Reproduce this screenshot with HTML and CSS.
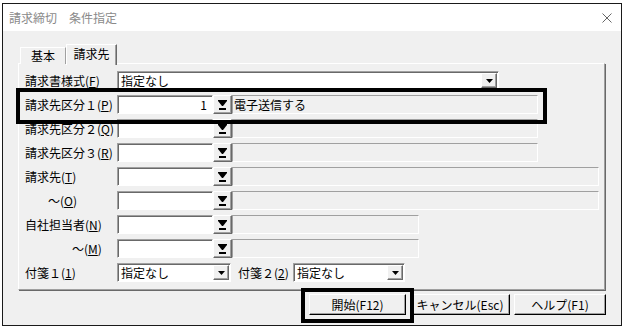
FILE: index.html
```html
<!DOCTYPE html>
<html lang="ja">
<head>
<meta charset="utf-8">
<link rel="stylesheet" href="styles.css">
</head>
<body>
<div class="window">
  <div class="titlebar">
    <span class="title">請求締切　条件指定</span>
    <svg class="close" width="10" height="10" viewBox="0 0 10 10"><path d="M0.5 0.5 L9.5 9.5 M9.5 0.5 L0.5 9.5" stroke="#666" stroke-width="1" fill="none"/></svg>
  </div>
  <div class="client">
    <div class="tabs">
      <div class="tab">基本</div>
      <div class="tab active">請求先</div>
    </div>
    <div class="panel">
      <div class="row">
        <span class="label">請求書様式(<u>F</u>)</span>
        <div class="select w-main"><span class="sel-text">指定なし</span><span class="sel-btn"><svg width="7" height="4" viewBox="0 0 7 4"><polygon points="0,0 7,0 3.5,4" fill="#000"/></svg></span></div>
      </div>
      <div class="row">
        <span class="label">請求先区分１(<u>P</u>)</span>
        <div class="input num">1</div>
        <span class="lookup"><svg width="9" height="10" viewBox="0 0 9 10"><polygon points="0,0 9,0 9,1 5,6 4,6 0,1" fill="#000"/><rect x="1" y="8" width="7" height="2" fill="#000"/></svg></span>
        <div class="field w-mid">電子送信する</div>
      </div>
      <div class="row">
        <span class="label">請求先区分２(<u>Q</u>)</span>
        <div class="input"></div>
        <span class="lookup"><svg width="9" height="10" viewBox="0 0 9 10"><polygon points="0,0 9,0 9,1 5,6 4,6 0,1" fill="#000"/><rect x="1" y="8" width="7" height="2" fill="#000"/></svg></span>
        <div class="field w-mid"></div>
      </div>
      <div class="row">
        <span class="label">請求先区分３(<u>R</u>)</span>
        <div class="input"></div>
        <span class="lookup"><svg width="9" height="10" viewBox="0 0 9 10"><polygon points="0,0 9,0 9,1 5,6 4,6 0,1" fill="#000"/><rect x="1" y="8" width="7" height="2" fill="#000"/></svg></span>
        <div class="field w-mid"></div>
      </div>
      <div class="row">
        <span class="label">請求先(<u>T</u>)</span>
        <div class="input"></div>
        <span class="lookup"><svg width="9" height="10" viewBox="0 0 9 10"><polygon points="0,0 9,0 9,1 5,6 4,6 0,1" fill="#000"/><rect x="1" y="8" width="7" height="2" fill="#000"/></svg></span>
        <div class="field w-long"></div>
      </div>
      <div class="row">
        <span class="label indent1">～(<u>O</u>)</span>
        <div class="input"></div>
        <span class="lookup"><svg width="9" height="10" viewBox="0 0 9 10"><polygon points="0,0 9,0 9,1 5,6 4,6 0,1" fill="#000"/><rect x="1" y="8" width="7" height="2" fill="#000"/></svg></span>
        <div class="field w-long"></div>
      </div>
      <div class="row">
        <span class="label">自社担当者(<u>N</u>)</span>
        <div class="input"></div>
        <span class="lookup"><svg width="9" height="10" viewBox="0 0 9 10"><polygon points="0,0 9,0 9,1 5,6 4,6 0,1" fill="#000"/><rect x="1" y="8" width="7" height="2" fill="#000"/></svg></span>
        <div class="field w-short"></div>
      </div>
      <div class="row">
        <span class="label indent2">～(<u>M</u>)</span>
        <div class="input"></div>
        <span class="lookup"><svg width="9" height="10" viewBox="0 0 9 10"><polygon points="0,0 9,0 9,1 5,6 4,6 0,1" fill="#000"/><rect x="1" y="8" width="7" height="2" fill="#000"/></svg></span>
        <div class="field w-short"></div>
      </div>
      <div class="row">
        <span class="label">付箋１(<u>1</u>)</span>
        <div class="select w-tag1"><span class="sel-text">指定なし</span><span class="sel-btn"><svg width="7" height="4" viewBox="0 0 7 4"><polygon points="0,0 7,0 3.5,4" fill="#000"/></svg></span></div>
        <span class="label2">付箋２(<u>2</u>)</span>
        <div class="select w-tag2"><span class="sel-text">指定なし</span><span class="sel-btn"><svg width="7" height="4" viewBox="0 0 7 4"><polygon points="0,0 7,0 3.5,4" fill="#000"/></svg></span></div>
      </div>
    </div>
    <div class="buttons">
      <div class="btn b-start">開始(F12)</div>
      <div class="btn b-cancel">キャンセル(Esc)</div>
      <div class="btn b-help">ヘルプ(F1)</div>
    </div>
  </div>
  <div class="mark mark-row"></div>
  <div class="mark mark-btn"></div>
</div>
</body>
</html>
```
FILE: styles.css
```css
* { box-sizing: border-box; }
html, body { margin: 0; padding: 0; background: #fff; }
body {
  font-family: "Noto Sans CJK JP", "Noto Sans", sans-serif;
  font-size: 12px;
  color: #000;
}
u { text-decoration: underline; text-underline-offset: 1px; }

.window {
  position: relative;
  margin: 3px 0 0 2px;
  width: 620px;
  height: 323px;
  border: 1px solid #1a1a1a;
  display: flex;
  flex-direction: column;
}
.titlebar {
  height: 27px;
  background: #fff;
  display: flex;
  align-items: center;
  justify-content: space-between;
  padding: 0 9px 0 6px;
}
.title { color: #8a8a8a; font-size: 12px; }
.close { margin-top: 1px; }

.client {
  flex: 1;
  background: #f0f0f0;
  padding: 13px 0 0 15px;
  display: flex;
  flex-direction: column;
}
.tabs {
  display: flex;
  align-items: flex-end;
  height: 20px;
  padding-left: 2px;
  position: relative;
  z-index: 1;
  margin-bottom: -1px;
}
.tab {
  height: 17px;
  width: 46px;
  border: 1px solid #fff;
  border-bottom: none;
  border-right: 1px solid #a0a0a0;
  display: flex;
  align-items: center;
  justify-content: center;
  background: #f0f0f0;
  line-height: 1;
}
.tab.active {
  height: 21px;
  width: 51px;
  margin-bottom: -1px;
  border-right: 1px solid #696969;
  box-shadow: inset -1px 0 0 #a0a0a0;
  padding-bottom: 3px;
}

.panel {
  width: 587px;
  height: 227px;
  border: 1px solid;
  border-color: #fff #a0a0a0 #a0a0a0 #fff;
  box-shadow: 1px 1px 0 #696969;
  padding: 7px 0 0 6px;
  display: flex;
  flex-direction: column;
  gap: 5px;
}
.row {
  height: 19px;
  display: flex;
  align-items: center;
}
.label {
  width: 92px;
  flex: none;
  white-space: nowrap;
  line-height: 1;
}
.indent1 { padding-left: 23px; }
.indent2 { padding-left: 47px; }
.label2 {
  margin-left: 7px;
  width: 55px;
  white-space: nowrap;
  line-height: 1;
}

.input {
  width: 96px;
  height: 19px;
  background: #fff;
  border: 1px solid;
  border-color: #a0a0a0 #fff #fff #a0a0a0;
  box-shadow: inset 1px 1px 0 #696969;
  flex: none;
  line-height: 17px;
  padding: 0 4px;
}
.input.num { text-align: right; padding-right: 5px; }

.lookup {
  width: 19px;
  height: 19px;
  flex: none;
  border: 1px solid;
  border-color: #fff #696969 #696969 #fff;
  box-shadow: inset -1px -1px 0 #a0a0a0;
  background: #f0f0f0;
  display: flex;
  align-items: center;
  justify-content: center;
  padding-top: 1px;
}

.field {
  height: 19px;
  background: #f0f0f0;
  border: 1px solid;
  border-color: #a0a0a0 #fff #fff #a0a0a0;
  flex: none;
  line-height: 17px;
  padding-left: 1px;
}
.w-mid { width: 306px; }
.w-long { width: 367px; }
.w-short { width: 187px; }

.select {
  height: 19px;
  background: #fff;
  border: 1px solid;
  border-color: #a0a0a0 #fff #fff #a0a0a0;
  box-shadow: inset 1px 1px 0 #696969;
  display: flex;
  align-items: center;
  justify-content: space-between;
  flex: none;
  padding: 1px 1px 1px 3px;
}
.sel-text { line-height: 1; }
.sel-btn {
  width: 16px;
  height: 15px;
  border: 1px solid;
  border-color: #fff #696969 #696969 #fff;
  box-shadow: inset -1px -1px 0 #a0a0a0;
  background: #f0f0f0;
  display: flex;
  align-items: center;
  justify-content: center;
}
.w-main { width: 382px; }
.w-tag1 { width: 114px; }
.w-tag2 { width: 112px; }

.buttons {
  display: flex;
  margin-top: 4px;
  padding-left: 291px;
}
.btn {
  height: 21px;
  border: 1px solid;
  border-color: #fff #000 #000 #fff;
  box-shadow: inset -1px -1px 0 #a0a0a0;
  background: #f0f0f0;
  display: flex;
  align-items: center;
  justify-content: center;
  line-height: 1;
  white-space: nowrap;
}
.b-start { width: 97px; }
.b-cancel { width: 100px; margin-left: 4px; }
.b-help { width: 92px; margin-left: 4px; }

.mark {
  position: absolute;
  border: 4px solid #000;
  pointer-events: none;
}
.mark-row { left: 13px; top: 84px; width: 531px; height: 36px; }
.mark-btn { left: 298px; top: 284px; width: 113px; height: 35px; }
```
